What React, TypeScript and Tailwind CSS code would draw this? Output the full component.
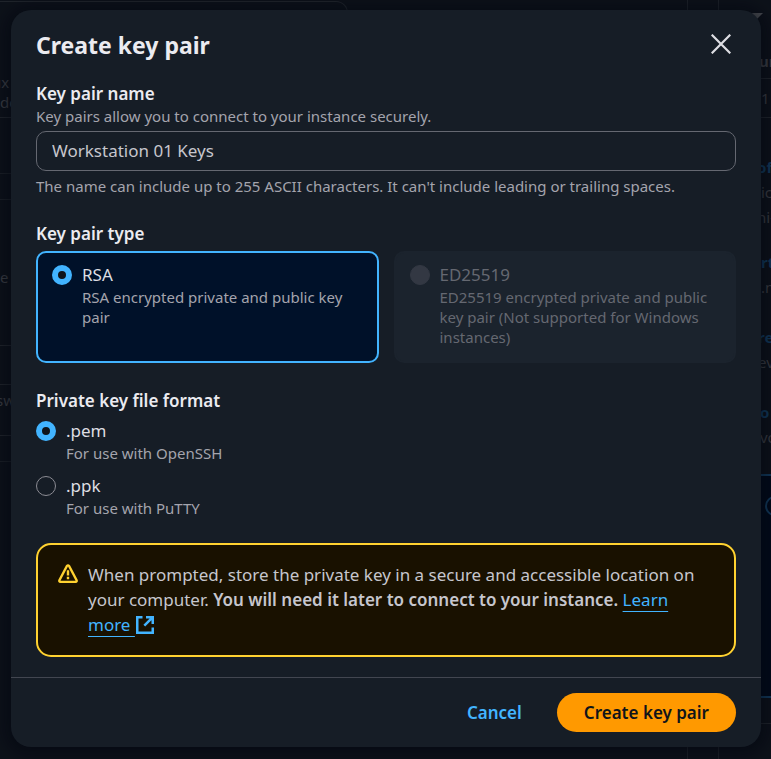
import { useState } from "react";
import type { ReactNode } from "react";

function FieldLabel({ children }: { children: ReactNode }) {
  return <span className="block text-[17px] leading-[25px] font-semibold text-[#ebebf0]">{children}</span>;
}

function PageBehind() {
  return (
    <div aria-hidden="true" className="absolute inset-0 flex justify-between overflow-hidden text-[15px] leading-5 text-[#3a3d43]">
      <div className="h-full w-[348px] shrink-0 pt-px">
        <div className="h-[117px] rounded-tr-xl border-t border-r border-b border-[#20252c] pt-[70px]">
          <p className="-indent-2">ux</p>
          <p>do</p>
        </div>
        <div className="h-[56px] border-b border-[#1b2027]" />
        <div className="h-[26px] border-b border-[#1b2027]" />
        <div className="h-[146px] border-b border-[#20252c] pt-[67px]">e</div>
        <div className="h-[39px] border-b border-[#20252c]" />
        <div className="h-[51px] border-b border-[#20252c] pt-[5px] -indent-1">sw</div>
        <div className="h-[26px] border-b border-[#1b2027]" />
      </div>
      <div className="flex w-[84px] shrink-0">
        <div className="w-8 shrink-0 border-x border-[#1d2229]" />
        <div className="flex min-w-0 grow flex-col">
          <div className="h-[79px] border-b border-[#20252c] pt-[13px] pl-8">
            <svg viewBox="0 0 12 6" className="h-[6px] w-3 fill-[#4a4d52]">
              <path d="M0 0h12L6 6z" />
            </svg>
            <p className="pt-[32px] pl-2 font-bold">ur</p>
          </div>
          <div className="h-[39px] border-b border-[#20252c] pt-[9px] pl-[42px]">1</div>
          <div className="flex flex-col pt-[37px] pl-[38px] leading-[25px]">
            <b className="text-[#12395a]">of</b>
            <span className="pl-1">ic</span>
            <span>ni-</span>
          </div>
          <div className="flex flex-col pt-[20px] pl-[42px] leading-[25px]">
            <b className="text-[#12395a]">rt</b>
            <span>.n</span>
          </div>
          <div className="flex flex-col pt-[25px] pl-[39px] leading-[25px]">
            <b className="text-[#12395a]">re</b>
            <span>ev</span>
          </div>
          <div className="flex flex-col pt-[25px] pl-[41px] leading-[25px]">
            <b className="text-[#12395a]">o</b>
            <span>vo</span>
          </div>
          <div className="mt-[24px] h-[224px] border-y-2 border-[#12395a] bg-[#020b1a] pt-[20px] pl-[46px]">
            <div className="size-5 rounded-full border-2 border-[#12395a]" />
          </div>
          <div className="h-[26px] border-b border-[#20252c]" />
        </div>
      </div>
    </div>
  );
}

function CloseIcon() {
  return (
    <svg viewBox="0 0 20 20" className="size-5" fill="none" stroke="currentColor" strokeWidth="2.2">
      <path d="M.7.7l18.6 18.6M19.3.7L.7 19.3" />
    </svg>
  );
}

function WarningIcon() {
  return (
    <svg viewBox="0 0 20 20" className="mt-[2px] size-5 shrink-0" fill="none" stroke="#ffd230" strokeWidth="2.4" strokeLinejoin="round">
      <path d="M8.9 2Q10 .8 11.1 2L18.6 16.2Q19 17.8 17.6 17.9H2.4Q1 17.8 1.4 16.2Z" />
      <path d="M10 6.3v5.1M10 12.7v2.5" />
    </svg>
  );
}

function ExternalIcon() {
  return (
    <svg viewBox="0 0 20 20" className="inline size-5 align-[-4px]" fill="none" stroke="currentColor" strokeWidth="2.5">
      <path d="M7.5 2.25H2.25v15.5h15.5V12.5M11 2.25h6.75V9M17.3 2.7L9.3 10.7" />
    </svg>
  );
}

const radio =
  "m-0 mt-[3px] size-5 shrink-0 appearance-none rounded-full border border-[#8c8c94] bg-[#161d26] checked:border-[6px] checked:border-[#42b4ff] checked:bg-[#0f141a] disabled:border-[#333843] disabled:bg-[#333843]";

export default function App() {
  const [name, setName] = useState("Workstation 01 Keys");
  const [format, setFormat] = useState("pem");
  const formats = [
    { id: "pem", title: ".pem", note: "For use with OpenSSH" },
    { id: "ppk", title: ".ppk", note: "For use with PuTTY" },
  ];

  return (
    <div className="relative min-h-screen overflow-hidden bg-[#0d121a] px-[10px] pt-[10px] pb-3 font-['Noto_Sans',sans-serif]">
      <PageBehind />
      <div role="dialog" aria-labelledby="title" className="relative ml-px rounded-[20px] bg-[#161d26] shadow-[0_2px_16px_6px_rgba(0,3,14,0.5)]">
        <header className="flex items-start justify-between px-[25px] pt-5">
          <h1 id="title" className="text-[23px] leading-[30px] font-bold text-[#ebebf0]">Create key pair</h1>
          <button type="button" aria-label="Close" className="flex h-7 w-[30px] items-center justify-center text-[#dedee3]">
            <CloseIcon />
          </button>
        </header>

        <form id="key-form" className="flex flex-col gap-[25px] px-[25px] pt-[21px] pb-5" onSubmit={(e) => e.preventDefault()}>
          <div>
            <label htmlFor="name"><FieldLabel>Key pair name</FieldLabel></label>
            <p className="text-[15px] leading-5 text-[#a4a4ad]">Key pairs allow you to connect to your instance securely.</p>
            <input
              id="name"
              value={name}
              onChange={(e) => setName(e.target.value)}
              className="mt-[5px] block h-10 w-full rounded-[10px] border border-[#656871] bg-[#161d26] px-[15px] pb-[2px] text-[17px] text-[#c6c6cd] outline-none"
            />
            <p className="mt-[5px] text-[15px] leading-5 text-[#a4a4ad]">
              The name can include up to 255 ASCII characters. It can't include leading or trailing spaces.
            </p>
          </div>

          <fieldset>
            <legend><FieldLabel>Key pair type</FieldLabel></legend>
            <div className="mt-[5px] grid grid-cols-2 gap-[15px]">
              <label className="flex min-h-28 gap-[10px] rounded-[10px] border-2 border-[#42b4ff] bg-[#001129] px-[14px] pt-[9px] pb-3">
                <input type="radio" name="type" defaultChecked className={radio} />
                <span>
                  <span className="block text-[17px] leading-[25px] text-[#dedee3]">RSA</span>
                  <span className="block text-[15px] leading-5 text-[#a4a4ad]">RSA encrypted private and public key pair</span>
                </span>
              </label>
              <label className="flex min-h-28 gap-[10px] rounded-[10px] border-2 border-[#1b232d] bg-[#1b232d] px-[14px] pt-[9px] pb-3">
                <input type="radio" name="type" disabled className={radio} />
                <span>
                  <span className="block text-[17px] leading-[25px] text-[#656871]">ED25519</span>
                  <span className="block text-[15px] leading-5 text-[#656871]">
                    ED25519 encrypted private and public key pair (Not supported for Windows instances)
                  </span>
                </span>
              </label>
            </div>
          </fieldset>

          <fieldset>
            <legend><FieldLabel>Private key file format</FieldLabel></legend>
            <div className="mt-[5px] flex flex-col gap-[10px]">
              {formats.map((f) => (
                <label key={f.id} className="flex gap-[10px]">
                  <input type="radio" name="format" checked={format === f.id} onChange={() => setFormat(f.id)} className={radio} />
                  <span>
                    <span className="block text-[17px] leading-[25px] text-[#dedee3]">{f.title}</span>
                    <span className="block text-[15px] leading-5 text-[#a4a4ad]">{f.note}</span>
                  </span>
                </label>
              ))}
            </div>
          </fieldset>

          <div role="note" className="flex gap-[10px] rounded-[15px] border-2 border-[#ffd230] bg-[#191100] px-5 pt-[17px] pb-[18px] text-[17px] leading-[25px] text-[#c6c6cd]">
            <WarningIcon />
            <p>
              When prompted, store the private key in a secure and accessible location on your computer.{" "}
              <b className="font-semibold">You will need it later to connect to your instance.</b>{" "}
              <a href="#" className="text-[#42b4ff] underline decoration-1 underline-offset-[5px]">Learn more <ExternalIcon /></a>
            </p>
          </div>
        </form>

        <footer className="flex items-center justify-end gap-2 border-t border-[#424650] px-[25px] py-[15px] text-[17px] leading-[25px] font-semibold">
          <button type="button" className="rounded-full px-[27px] py-[7px] text-[#42b4ff]">Cancel</button>
          <button type="submit" form="key-form" className="rounded-full bg-[#ff9900] px-[27px] py-[7px] text-[#0f141a]">Create key pair</button>
        </footer>
      </div>
    </div>
  );
}
